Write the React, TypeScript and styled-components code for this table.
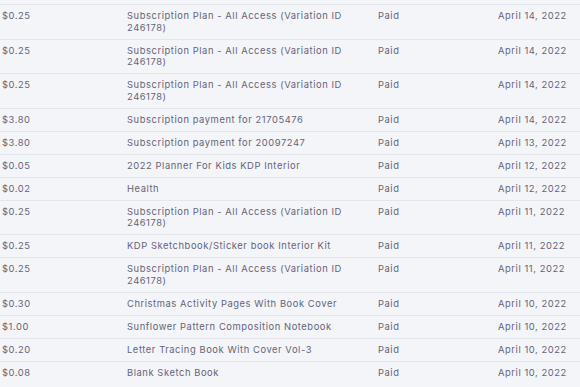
import { createGlobalStyle, styled } from "styled-components";

const GlobalStyle = createGlobalStyle`
  html, body {
    margin: 0;
    padding: 0;
    background: #f4f5f9;
  }
`;

type Payment = {
  amount: string;
  item: string;
  status: string;
  date: string;
};

const PLAN = "Subscription Plan - All Access (Variation ID 246178)";

const payments: Payment[] = [
  { amount: "$0.25", item: PLAN, status: "Paid", date: "April 14, 2022" },
  { amount: "$0.25", item: PLAN, status: "Paid", date: "April 14, 2022" },
  { amount: "$0.25", item: PLAN, status: "Paid", date: "April 14, 2022" },
  { amount: "$3.80", item: "Subscription payment for 21705476", status: "Paid", date: "April 14, 2022" },
  { amount: "$3.80", item: "Subscription payment for 20097247", status: "Paid", date: "April 13, 2022" },
  { amount: "$0.05", item: "2022 Planner For Kids KDP Interior", status: "Paid", date: "April 12, 2022" },
  { amount: "$0.02", item: "Health", status: "Paid", date: "April 12, 2022" },
  { amount: "$0.25", item: PLAN, status: "Paid", date: "April 11, 2022" },
  { amount: "$0.25", item: "KDP Sketchbook/Sticker book Interior Kit", status: "Paid", date: "April 11, 2022" },
  { amount: "$0.25", item: PLAN, status: "Paid", date: "April 11, 2022" },
  { amount: "$0.30", item: "Christmas Activity Pages With Book Cover", status: "Paid", date: "April 10, 2022" },
  { amount: "$1.00", item: "Sunflower Pattern Composition Notebook", status: "Paid", date: "April 10, 2022" },
  { amount: "$0.20", item: "Letter Tracing Book With Cover Vol-3", status: "Paid", date: "April 10, 2022" },
  { amount: "$0.08", item: "Blank Sketch Book", status: "Paid", date: "April 10, 2022" },
];

const App = () => {
  return (
    <Page>
      <GlobalStyle />
      <Table>
        <colgroup>
          <col style={{ width: 127 }} />
          <col style={{ width: 251 }} />
          <col style={{ width: 120 }} />
          <col />
        </colgroup>
        <tbody>
          {payments.map((p, i) => (
            <Row key={i}>
              <Cell $pl={2}>{p.amount}</Cell>
              <Cell $pr={28}>{p.item}</Cell>
              <Cell>{p.status}</Cell>
              <Cell>{p.date}</Cell>
            </Row>
          ))}
        </tbody>
      </Table>
    </Page>
  );
};

export default App;

const Page = styled.div`
  width: 580px;
  height: 387px;
  overflow: hidden;
  padding-top: 4px;
  box-sizing: border-box;
  background: #f4f5f9;
`;

const Table = styled.table`
  width: 580px;
  border-collapse: collapse;
  table-layout: fixed;
  font-family: Inter, "Liberation Sans", sans-serif;
  font-size: 9.4px;
  letter-spacing: 0.56px;
  color: #646477;
`;

const Row = styled.tr`
  border-top: 1px solid #e5e6ec;
`;

const Cell = styled.td<{ $pl?: number; $pr?: number }>`
  vertical-align: top;
  line-height: 11.5px;
  padding: 5px ${(p) => p.$pr ?? 0}px 5.5px ${(p) => p.$pl ?? 0}px;
  white-space: normal;
`;
